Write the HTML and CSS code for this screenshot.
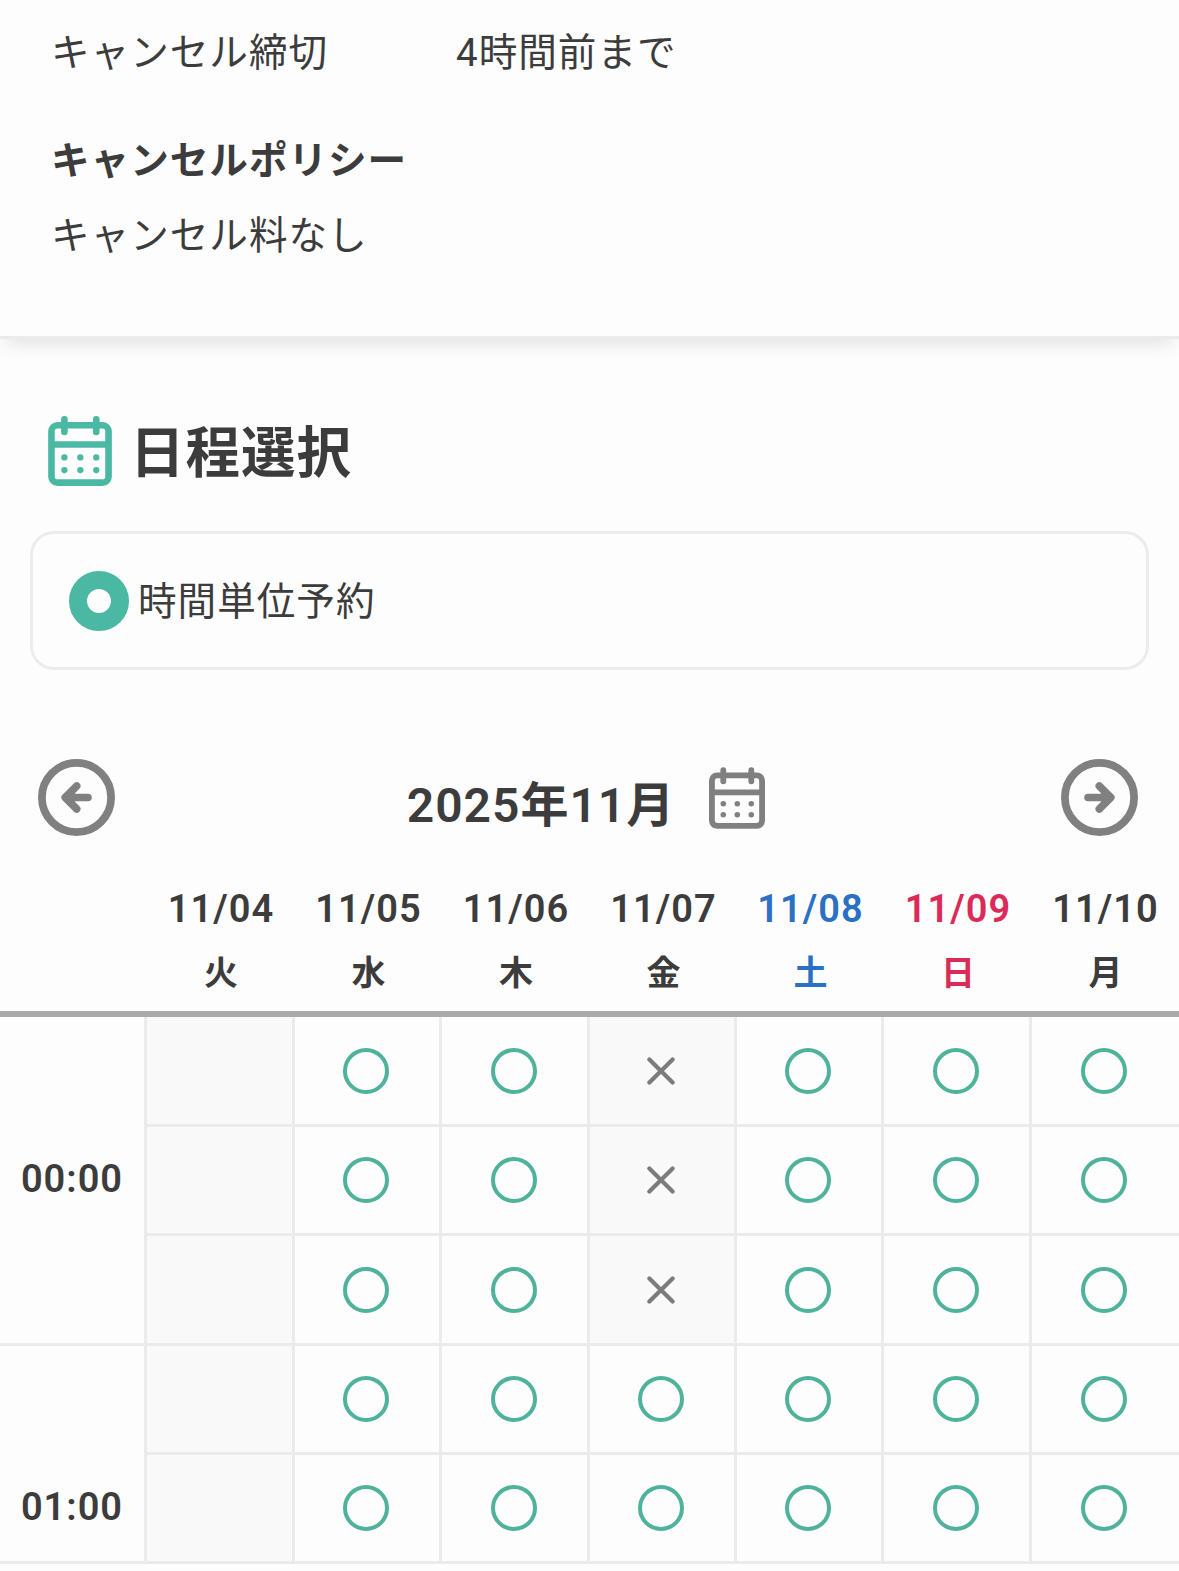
FILE: index.html
```
<!DOCTYPE html>
<html lang="ja">
<head>
<meta charset="UTF-8">
<meta name="viewport" content="width=device-width, initial-scale=1.0">
<title>日程選択</title>
<link rel="stylesheet" href="styles.css">
</head>
<body>

<svg class="sprite" aria-hidden="true">
    <symbol id="calendar" viewBox="0 0 192 211">
        <rect x="10" y="28" width="172" height="173" rx="18" fill="none" stroke="currentColor" stroke-width="20"/>
        <path d="M10 86H182" fill="none" stroke="currentColor" stroke-width="20"/>
        <path d="M49 10V48M145 10V48" fill="none" stroke="currentColor" stroke-width="20" stroke-linecap="round"/>
        <g fill="currentColor">
            <circle cx="49" cy="125" r="9.5"/><circle cx="97" cy="125" r="9.5"/><circle cx="145" cy="125" r="9.5"/>
            <circle cx="49" cy="163" r="9.5"/><circle cx="97" cy="163" r="9.5"/><circle cx="145" cy="163" r="9.5"/>
        </g>
    </symbol>
    <symbol id="arrow" viewBox="0 0 77 77">
        <circle cx="38.5" cy="38.5" r="34.6" fill="none" stroke="currentColor" stroke-width="7.8"/>
        <path d="M50 38.5H28M38.7 27L27.2 38.5L38.7 50" fill="none" stroke="currentColor" stroke-width="7.6" stroke-linecap="round" stroke-linejoin="round"/>
        <path d="M28 38.5L37 29.5V47.5Z" fill="currentColor"/>
    </symbol>
    <symbol id="cross" viewBox="0 0 28 28">
        <path d="M2.4 2.4L25.6 25.6M25.6 2.4L2.4 25.6" fill="none" stroke="currentColor" stroke-width="4.2" stroke-linecap="round"/>
    </symbol>
</svg>

<!-- キャンセル情報 -->
<section class="info">
    <dl class="infoRow">
        <dt>キャンセル締切</dt>
        <dd>4時間前まで</dd>
    </dl>
    <h3>キャンセルポリシー</h3>
    <p>キャンセル料なし</p>
</section>

<!-- 日程選択 -->
<section class="schedule">
    <h2><svg class="titleIcon"><use href="#calendar"/></svg><span>日程選択</span></h2>

    <label class="planBox">
        <input type="radio" name="plan" checked>
        <span>時間単位予約</span>
    </label>

    <div class="monthNav">
        <button type="button" aria-label="前の週"><svg><use href="#arrow"/></svg></button>
        <div class="month"><span>2025年11月</span><svg class="monthIcon"><use href="#calendar"/></svg></div>
        <button type="button" class="next" aria-label="次の週"><svg><use href="#arrow"/></svg></button>
    </div>
</section>

<div class="week">
    <div></div>
    <div class="day">11/04<span>火</span></div>
    <div class="day">11/05<span>水</span></div>
    <div class="day">11/06<span>木</span></div>
    <div class="day">11/07<span>金</span></div>
    <div class="day sat">11/08<span>土</span></div>
    <div class="day sun">11/09<span>日</span></div>
    <div class="day">11/10<span>月</span></div>
</div>

<div class="slots">
    <div class="time first">00:00</div>
    <div class="cell off"></div>
    <div class="cell"><i class="ok"></i></div>
    <div class="cell"><i class="ok"></i></div>
    <div class="cell off"><svg class="ng"><use href="#cross"/></svg></div>
    <div class="cell"><i class="ok"></i></div>
    <div class="cell"><i class="ok"></i></div>
    <div class="cell last"><i class="ok"></i></div>

    <div class="cell off"></div>
    <div class="cell"><i class="ok"></i></div>
    <div class="cell"><i class="ok"></i></div>
    <div class="cell off"><svg class="ng"><use href="#cross"/></svg></div>
    <div class="cell"><i class="ok"></i></div>
    <div class="cell"><i class="ok"></i></div>
    <div class="cell last"><i class="ok"></i></div>

    <div class="cell off"></div>
    <div class="cell"><i class="ok"></i></div>
    <div class="cell"><i class="ok"></i></div>
    <div class="cell off"><svg class="ng"><use href="#cross"/></svg></div>
    <div class="cell"><i class="ok"></i></div>
    <div class="cell"><i class="ok"></i></div>
    <div class="cell last"><i class="ok"></i></div>

    <div class="time second">01:00</div>
    <div class="cell off"></div>
    <div class="cell"><i class="ok"></i></div>
    <div class="cell"><i class="ok"></i></div>
    <div class="cell"><i class="ok"></i></div>
    <div class="cell"><i class="ok"></i></div>
    <div class="cell"><i class="ok"></i></div>
    <div class="cell last"><i class="ok"></i></div>

    <div class="cell off"></div>
    <div class="cell"><i class="ok"></i></div>
    <div class="cell"><i class="ok"></i></div>
    <div class="cell"><i class="ok"></i></div>
    <div class="cell"><i class="ok"></i></div>
    <div class="cell"><i class="ok"></i></div>
    <div class="cell last"><i class="ok"></i></div>
</div>

</body>
</html>
```
FILE: styles.css
```
* {
    box-sizing: border-box;
}

body {
    margin: 0;
    height: 1571px;
    overflow: hidden;
    background-color: #fdfdfd;
    color: #3c3c3c;
    font-family: Roboto, "Noto Sans CJK JP", sans-serif;
    font-size: 38.6px;
    letter-spacing: 1px;
}

h2, h3, p, dl, dd {
    margin: 0;
}

.sprite {
    display: none;
}

/* キャンセル情報 */
.info {
    height: 339px;
    padding: 23px 52px 0 51px;
    border-bottom: 3px solid #ebebeb;
    line-height: 60px;
    box-shadow: 0 10px 18px -6px rgba(0, 0, 0, 0.12);
}

.infoRow {
    display: grid;
    grid-template-columns: 405px 1fr;
    margin-bottom: 48px;
}

.info h3 {
    margin-bottom: 15px;
    font-size: 38.6px;
}

/* 日程選択 */
.schedule {
    padding: 69px 30px 0;
}

.schedule h2 {
    display: flex;
    align-items: center;
    height: 86px;
    padding-left: 18px;
    font-size: 54.5px;
}

.schedule h2 span {
    padding-bottom: 6px;
}

.titleIcon {
    width: 64px;
    height: 70px;
    margin-right: 18px;
    color: #4ab8a2;
}

.planBox {
    display: flex;
    align-items: center;
    height: 139px;
    margin-top: 37px;
    padding-left: 36px;
    border: 3px solid #ececec;
    border-radius: 24px;
}

.planBox input {
    appearance: none;
    width: 60px;
    height: 60px;
    margin: 0 9px 0 0;
    border: 18px solid #4ab8a2;
    border-radius: 50%;
}

.planBox span {
    padding-bottom: 6px;
}

.monthNav {
    display: flex;
    align-items: center;
    justify-content: space-between;
    height: 77px;
    margin-top: 89px;
    padding: 0 11px 0 8px;
    color: #808080;
}

.monthNav button {
    width: 77px;
    height: 77px;
    padding: 0;
    border: none;
    background: none;
    color: inherit;
}

.monthNav button svg {
    display: block;
    width: 77px;
    height: 77px;
}

.next {
    transform: scaleX(-1);
}

.month {
    display: flex;
    align-items: center;
    margin-right: 4px;
}

.month span {
    padding-top: 6px;
    color: #3c3c3c;
    font-size: 48px;
    font-weight: 600;
}

.monthIcon {
    width: 56px;
    height: 62px;
    margin-left: 34px;
}

/* 予約カレンダー */
.week, .slots {
    display: grid;
    grid-template-columns: 147px 148px 147px 148px 147px 147px 148px 147px;
}

.week {
    height: 181px;
    padding-top: 41px;
    border-bottom: 6px solid #a9a9a9;
    font-size: 38px;
    font-weight: 600;
    line-height: 64px;
    text-align: center;
}

.day span {
    display: block;
    font-size: 34px;
    font-weight: bold;
    letter-spacing: 0;
}

.sat {
    color: #2a70c4;
}

.sun {
    color: #dc2a58;
}

.slots {
    grid-template-rows: 110px 109px 110px 109px 109px;
}

.time, .cell {
    display: flex;
    align-items: center;
    justify-content: center;
    border-right: 3px solid #ebebeb;
    border-bottom: 3px solid #ebebeb;
}

.time {
    font-size: 38px;
    font-weight: 600;
}

.first {
    grid-row: 1 / 4;
    grid-column: 1;
    padding-bottom: 3px;
}

.second {
    grid-row: 4 / 6;
    grid-column: 1;
    padding-top: 106px;
}

.cell {
    padding-right: 2px;
}

.last {
    border-right: none;
    padding-right: 3px;
}

.off {
    background-color: #f9f9f9;
}

.ok {
    width: 46px;
    height: 46px;
    border: 4.5px solid #4fb29b;
    border-radius: 50%;
}

.ng {
    width: 28px;
    height: 28px;
    color: #7c7c7c;
}
```
